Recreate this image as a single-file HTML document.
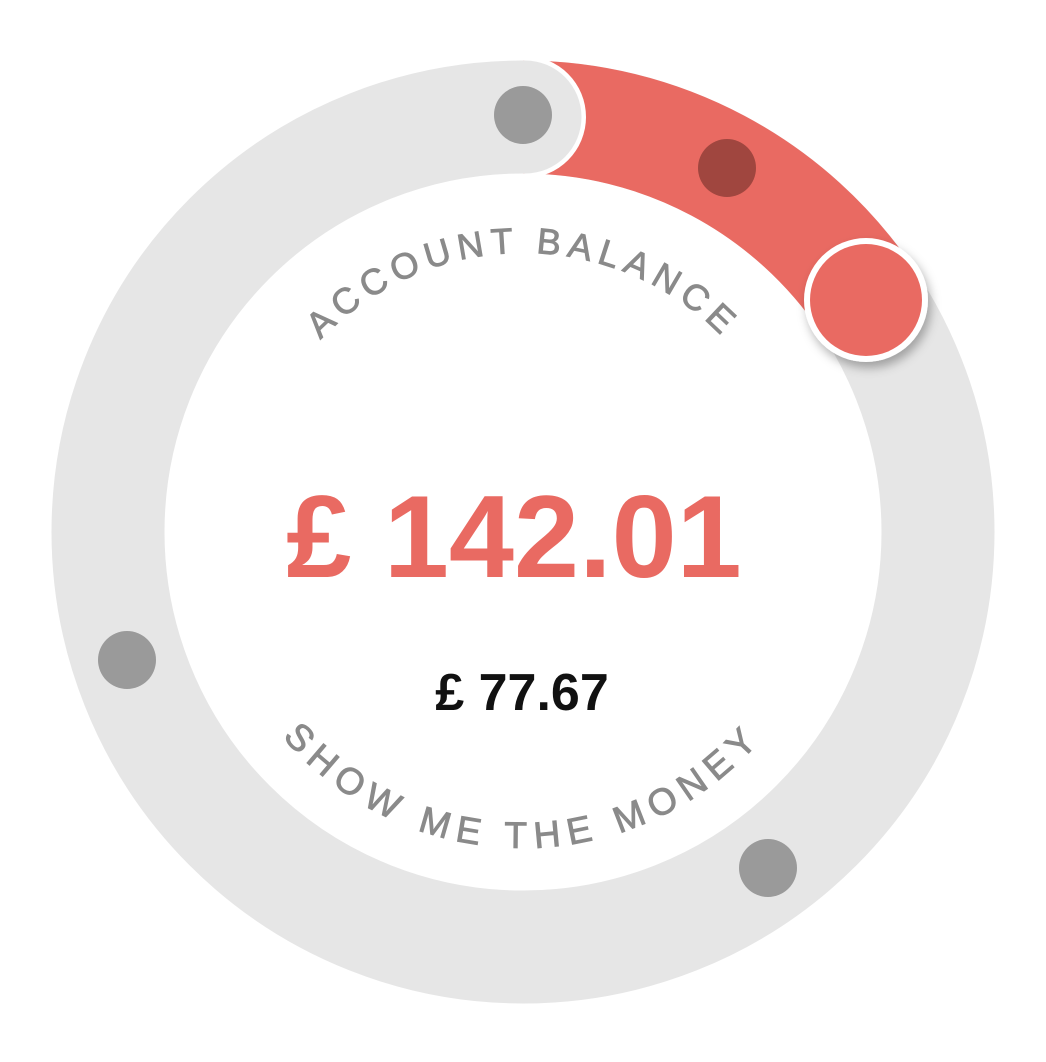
<!DOCTYPE html>
<html><head><meta charset="utf-8"><style>
html,body{margin:0;padding:0;background:#fff;width:1046px;height:1062px;overflow:hidden}
svg{display:block}
</style></head><body>
<svg width="1046" height="1062" viewBox="0 0 1046 1062" xmlns="http://www.w3.org/2000/svg">
<defs>
<filter id="sh" x="-50%" y="-50%" width="200%" height="200%"><feDropShadow dx="3" dy="6" stdDeviation="5" flood-color="#000" flood-opacity="0.3"/></filter>
<path id="top" d="M 244 532 A 279 279 0 0 1 802 532"/>
<path id="bot" d="M 207 532 A 316 316 0 0 0 839 532"/>
<clipPath id="rh"><rect x="525" y="0" width="200" height="300"/></clipPath>
</defs>
<circle cx="523" cy="532" r="415" fill="none" stroke="#e6e6e6" stroke-width="113"/>
<path d="M 523 117 A 415 415 0 0 1 867 300" fill="none" stroke="#e96a62" stroke-width="113"/>
<circle cx="525" cy="117" r="61" fill="#fff" clip-path="url(#rh)"/>
<circle cx="525" cy="117" r="56.5" fill="#e6e6e6"/>
<circle cx="523" cy="115" r="29" fill="#9a9a9a"/>
<circle cx="727" cy="168" r="29" fill="#a0463f"/>
<circle cx="127" cy="660" r="29" fill="#9a9a9a"/>
<circle cx="768" cy="868" r="29" fill="#9a9a9a"/>
<circle cx="866" cy="300" r="62" fill="#fff" filter="url(#sh)"/>
<circle cx="866" cy="300" r="56" fill="#e96a62"/>
<text font-family="Liberation Sans, sans-serif" font-size="36" fill="#8a8a8a" stroke="#8a8a8a" stroke-width="0.9" letter-spacing="6.5" text-anchor="middle"><textPath href="#top" startOffset="50%">ACCOUNT BALANCE</textPath></text>
<text font-family="Liberation Sans, sans-serif" font-size="37" fill="#8a8a8a" stroke="#8a8a8a" stroke-width="0.9" letter-spacing="8" text-anchor="middle"><textPath href="#bot" startOffset="50%">SHOW ME THE MONEY</textPath></text>
<text x="514" y="577" font-family="Liberation Sans, sans-serif" font-weight="bold" font-size="117" fill="#e96a62" text-anchor="middle">£ 142.01</text>
<text x="522" y="710" font-family="Liberation Sans, sans-serif" font-weight="bold" font-size="52" fill="#111" text-anchor="middle">£ 77.67</text>
</svg>
</body></html>
